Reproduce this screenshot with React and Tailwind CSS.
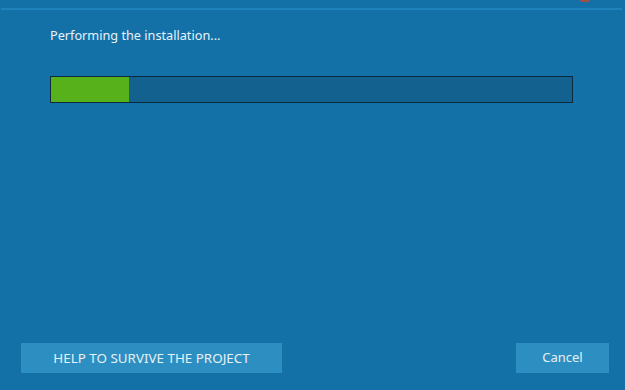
import React from "react";

const App = () => {
  const progress = 15; // percent done

  return (
    <div
      className="relative w-[625px] h-[390px] bg-[#1371a8] flex flex-col overflow-hidden"
      style={{ fontFamily: '"Noto Sans", "Open Sans", sans-serif' }}
    >
      {/* close button peeking from the title bar */}
      <div className="absolute left-[580px] top-0 w-[10px] h-[2px] rounded-b bg-[#a0504a]" />

      {/* divider under the title bar */}
      <div className="mt-[8px] ml-[1px] w-[621px] h-[2px] bg-[#1f82ba]" />

      <div className="pl-[50px] pt-[17px] text-[12.7px] leading-[16px] text-[#e8f1f8]">
        Performing the installation...
      </div>

      <div className="ml-[50px] mt-[33px] w-[523px] h-[27px] border border-[#0b2a40] bg-[#12618f] flex">
        <div className="h-full bg-[#56b11b]" style={{ width: `${progress}%` }} />
      </div>

      <div className="mt-auto mb-[17px] px-[21px] flex justify-between">
        <button className="w-[261px] h-[30px] bg-[#2d8fc1] text-[13.4px] text-[#e6f0f7]">
          HELP TO SURVIVE THE PROJECT
        </button>
        <button className="mr-[-5px] w-[93px] h-[30px] bg-[#2d8fc1] text-[13px] text-[#e6f0f7]">
          Cancel
        </button>
      </div>
    </div>
  );
};

export default App;
